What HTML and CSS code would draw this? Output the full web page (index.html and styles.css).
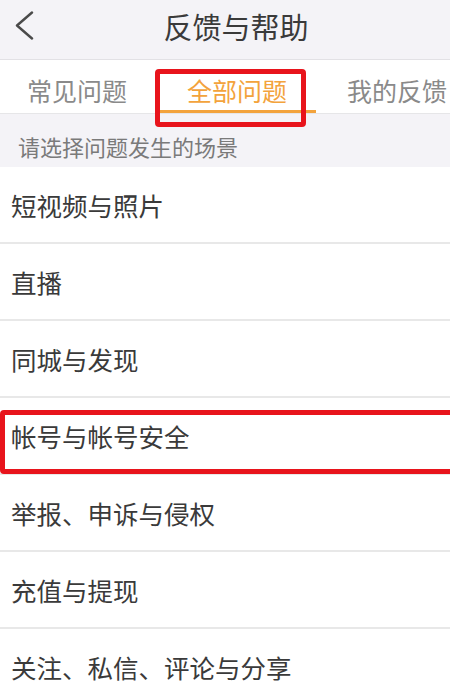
FILE: index.html
```html
<!DOCTYPE html>
<html lang="zh-CN">
<head>
    <meta charset="UTF-8">
    <meta name="viewport" content="width=device-width, initial-scale=1.0">
    <title>反馈与帮助</title>
    <link rel="stylesheet" href="styles.css">
</head>
<body>
    <div class="page">
        <div class="header">
            <span class="back-button">
                <svg width="20" height="30" viewBox="0 0 20 30">
                    <polyline points="17,1.5 2,14.5 17,27.5" fill="none" stroke="#4a4a4a" stroke-width="2.4" stroke-linecap="round" stroke-linejoin="round"/>
                </svg>
            </span>
            <h1>反馈与帮助</h1>
        </div>

        <div class="tabs">
            <div class="tab">常见问题</div>
            <div class="tab active">全部问题</div>
            <div class="tab">我的反馈</div>
        </div>

        <div class="section-title">请选择问题发生的场景</div>

        <ul class="topic-list">
            <li>短视频与照片</li>
            <li>直播</li>
            <li>同城与发现</li>
            <li>帐号与帐号安全</li>
            <li>举报、申诉与侵权</li>
            <li>充值与提现</li>
            <li>关注、私信、评论与分享</li>
        </ul>

        <div class="mark mark-tab"></div>
        <div class="mark mark-row"></div>
    </div>
</body>
</html>
```

FILE: styles.css
```css
body {
    margin: 0;
    font-family: "Noto Sans CJK SC", "Noto Sans", sans-serif;
    background-color: #fff;
    color: #333;
}
.page {
    position: relative;
    width: 450px;
    height: 700px;
    overflow: hidden;
}

.header {
    height: 59px;
    background-color: #f4f3f7;
    border-bottom: 1px solid #e2e1e5;
    display: flex;
    align-items: center;
    justify-content: center;
    padding-left: 22px;
    position: relative;
}
.back-button {
    position: absolute;
    left: 15px;
    top: 11px;
    width: 20px;
    height: 30px;
}
.header h1 {
    margin: 0;
    font-size: 29px;
    font-weight: 400;
    color: #3a3a3a;
    line-height: 1;
    margin-top: -6px;
}

.tabs {
    display: flex;
    height: 53px;
    margin-left: -3px;
    border-bottom: 1px solid #e6e6e8;
}
.tab {
    flex: 0 0 160px;
    display: flex;
    align-items: center;
    justify-content: center;
    font-size: 25px;
    color: #8a8a8a;
    position: relative;
    padding-top: 6px;
    box-sizing: border-box;
}
.tab.active {
    color: #f3a33c;
}
.tab.active::after {
    content: "";
    position: absolute;
    left: 3px;
    right: 1px;
    bottom: 0;
    height: 3px;
    background-color: #f3a33c;
}

.section-title {
    height: 53px;
    background-color: #f4f3f7;
    font-size: 22px;
    color: #7a7a7a;
    padding: 0 18px;
    display: flex;
    align-items: center;
    padding-top: 10px;
    box-sizing: border-box;
}

.topic-list {
    list-style: none;
    margin: 0;
    padding: 0;
}
.topic-list li {
    height: 75px;
    border-bottom: 2px solid #e8e8e8;
    display: flex;
    align-items: center;
    padding-left: 11px;
    font-size: 25.5px;
    color: #3a3a3a;
}

.mark {
    position: absolute;
    border: 5px solid #e8141c;
    border-radius: 4px;
    box-sizing: border-box;
}
.mark-tab {
    left: 155px;
    top: 69px;
    width: 151px;
    height: 58px;
}
.mark-row {
    left: 0;
    top: 410px;
    width: 460px;
    height: 64px;
}
```
